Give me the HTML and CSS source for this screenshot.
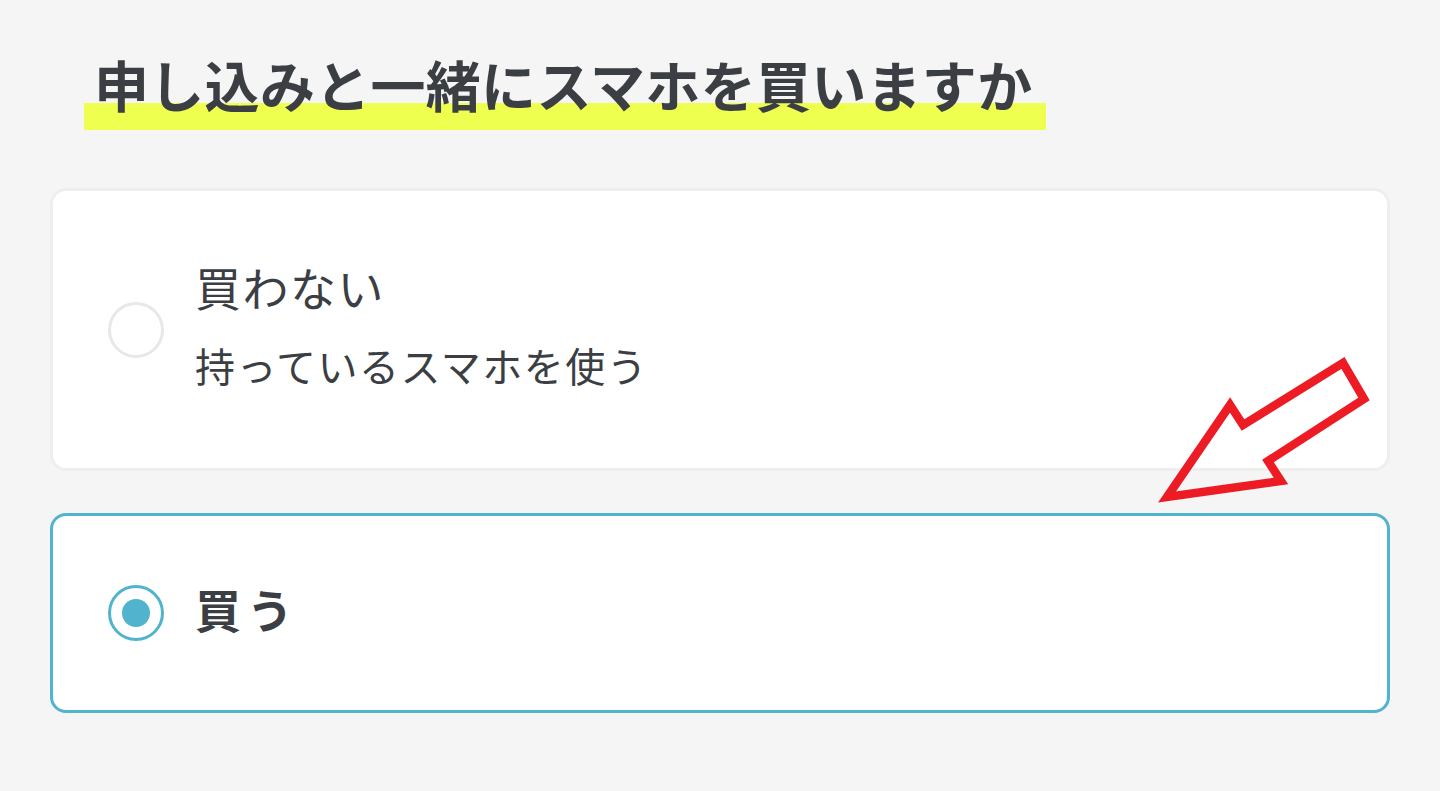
FILE: index.html
```html
<!DOCTYPE html>
<html lang="ja">
<head>
    <meta charset="UTF-8">
    <title>スマホ購入の選択</title>
    <link rel="stylesheet" href="styles.css">
</head>
<body>
    <div class="page">
        <h2 class="title"><span class="title-mark">申し込みと一緒にスマホを買いますか</span></h2>

        <div class="options">
            <label class="option">
                <span class="radio"></span>
                <span class="option-text">
                    <span class="option-name">買わない</span>
                    <span class="option-desc">持っているスマホを使う</span>
                </span>
            </label>
            <label class="option option-short is-checked">
                <span class="radio"></span>
                <span class="option-text">
                    <span class="option-name">買う</span>
                </span>
            </label>
        </div>

        <!-- 注目用の矢印 -->
        <svg class="arrow" width="230" height="160" viewBox="0 0 230 160">
            <polygon points="17,147 80,55 93,75 193,13 214,49 118,111 131,131"
                     fill="none" stroke="#ed1c24" stroke-width="8.5" stroke-linejoin="miter" stroke-miterlimit="10"/>
        </svg>
    </div>
</body>
</html>
```

FILE: styles.css
```css
* {
    margin: 0;
    padding: 0;
    box-sizing: border-box;
}
html, body {
    background: #f5f5f5;
}
body {
    font-family: "Noto Sans CJK JP", "Noto Sans", sans-serif;
    color: #3b3e43;
}
.page {
    position: relative;
    padding: 40px 50px 0;
    height: 791px;
}

/* 見出し */
.title {
    font-size: 55px;
    font-weight: 700;
    line-height: 86px;
    letter-spacing: 0.3px;
    margin-left: 34px;
}
.title-mark {
    display: inline-block;
    height: 90px;
    padding: 0 14px 0 10px;
    background: linear-gradient(to bottom, transparent 63px, #eeff4f 63px);
}

/* 選択肢 */
.options {
    margin-top: 58px;
    display: flex;
    flex-direction: column;
    gap: 42px;
}
.option {
    display: flex;
    align-items: center;
    gap: 31px;
    height: 283px;
    padding-left: 55px;
    background: #fff;
    border: 3px solid #eeeeec;
    border-radius: 16px;
}
.option-short {
    height: 200px;
}
.radio {
    flex: none;
    width: 56px;
    height: 56px;
    border: 3px solid #e8e8e8;
    border-radius: 50%;
    display: flex;
    align-items: center;
    justify-content: center;
}
.option-text {
    display: flex;
    flex-direction: column;
    padding-bottom: 12px;
}
.option-name {
    font-size: 46px;
    line-height: 56px;
    letter-spacing: 1.5px;
}
.option-desc {
    margin-top: 26px;
    font-size: 40px;
    line-height: 50px;
    letter-spacing: 1.5px;
}

.is-checked {
    border-color: #52b3cf;
}
.is-checked .radio {
    border-color: #52b3cf;
}
.is-checked .radio::after {
    content: "";
    width: 28px;
    height: 28px;
    border-radius: 50%;
    background: #52b3cf;
}
.is-checked .option-text {
    padding-bottom: 10px;
}
.is-checked .option-name {
    font-weight: 700;
    letter-spacing: 6px;
}

.arrow {
    position: absolute;
    left: 1150px;
    top: 350px;
}
```
